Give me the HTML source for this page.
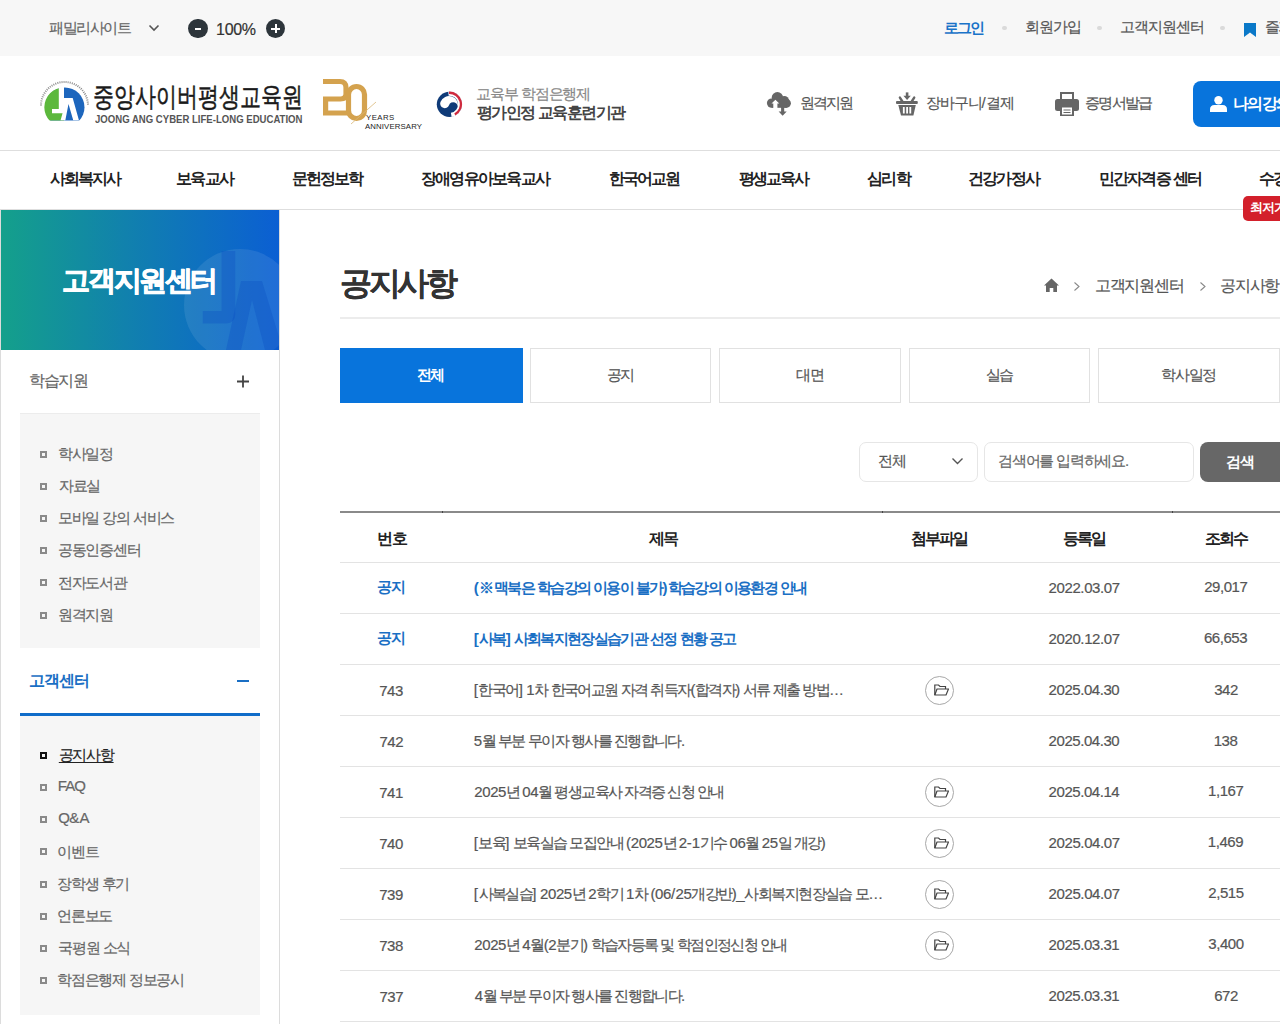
<!DOCTYPE html>
<html lang="ko"><head><meta charset="utf-8"><title>공지사항</title>
<style>
*{margin:0;padding:0;box-sizing:border-box}
html,body{width:1280px;height:1024px;overflow:hidden;background:#fff}
body{font-family:"Liberation Sans",sans-serif;color:#333}
#page{position:relative;width:1280px;height:1024px;overflow:hidden}
.t{position:absolute;white-space:nowrap}
.a{position:absolute}
#topbar{position:absolute;left:0;top:0;width:1280px;height:56px;background:#f7f7f7}
.hline{position:absolute;left:0;width:1280px;height:1px;background:#dedede}
.dot{position:absolute;width:4.5px;height:4.5px;border-radius:50%;background:#dadada;top:25.8px}
.zc{position:absolute;top:18.5px;width:19.5px;height:19.5px;border-radius:50%;background:#2d353b}
#myBtn{position:absolute;left:1193px;top:81px;width:140px;height:46px;border-radius:8px;background:#0874dc}
#badge{position:absolute;left:1243px;top:196px;width:70px;height:25px;border-radius:5px;background:#d3202b}
#side{position:absolute;left:0;top:210px;width:280px;height:814px;border-left:1px solid #dcdcdc;border-right:1px solid #dcdcdc}
#banner{position:absolute;left:1px;top:210px;width:278px;height:140px;overflow:hidden;background:linear-gradient(90deg,#14a08b 0%,#1181ad 45%,#0b5fd3 100%)}
.sub{position:absolute;left:20px;width:240px;background:#f6f6f6;border-top:1px solid #ececec}
.bul{position:absolute;left:40px;width:7px;height:7px;border:2px solid #8a8a8a}
.tab{position:absolute;top:348px;height:55px;border:1px solid #e1e1e1;background:#fff}
.rline{position:absolute;left:340px;width:940px;height:1px;background:#e3e3e3}
.att{position:absolute;left:925.2px;width:29px;height:29px;border:1px solid #a8a8a8;border-radius:50%}
.att svg{position:absolute;left:8px;top:7.3px}

</style></head><body>
<div id="page">
<div id="topbar"></div>
<svg class="a" style="left:148px;top:24px" width="12" height="8" viewBox="0 0 12 8"><path d="M1.5 1.5 L6 6 L10.5 1.5" fill="none" stroke="#555" stroke-width="1.6"/></svg>
<div class="zc" style="left:188.2px"><div class="a" style="left:6.5px;top:9px;width:6.5px;height:2px;background:#fff"></div></div>
<div class="zc" style="left:265.8px"><div class="a" style="left:5.5px;top:9px;width:8.5px;height:2px;background:#fff"></div><div class="a" style="left:8.75px;top:5.5px;width:2px;height:9px;background:#fff"></div></div>
<div class="dot" style="left:1002px"></div>
<div class="dot" style="left:1097px"></div>
<div class="dot" style="left:1220px"></div>
<svg class="a" style="left:1244px;top:23px" width="12" height="14" viewBox="0 0 12 14"><path d="M0 0 H12 V14 L6 9.5 L0 14 Z" fill="#0a78c8"/></svg>

<!-- header logo -->
<svg class="a" style="left:38px;top:76px" width="54" height="50" viewBox="0 0 54 50">
  <defs><clipPath id="lc"><rect x="0" y="0" width="54" height="44.4"/></clipPath></defs>
  <g clip-path="url(#lc)">
    <circle cx="26.8" cy="31.3" r="19.7" fill="#1d66bd"/>
    <path d="M26 11.6 A19.7 19.7 0 0 0 26 51 Z" fill="#5cb83c"/>
    <path d="M20.8 8 H26 V37.3 H14 V33 H20.8 Z" fill="#fff"/>
    <path d="M26 22 H34.7 L41 44.4 H35.3 L30.5 28 L27.3 44.4 H22.5 L26 32 Z" fill="#fff"/>
  </g>
  <path d="M3 29.5 A23.5 23.5 0 0 1 50 29.5" fill="none" stroke="#8c8c8c" stroke-width="2" stroke-dasharray="1 1.1"/>
</svg>
<!-- 20 years -->
<svg class="a" style="left:320px;top:76px" width="110" height="56" viewBox="0 0 110 56">
  <path d="M3 5.5 H20 Q26 5.5 26 11.5 V18 Q26 23 20.5 23 H5.6 V37 H28" fill="none" stroke="#d4a24e" stroke-width="5.2" stroke-linejoin="miter"/>
  <rect x="28.5" y="10.5" width="16" height="32" rx="8" fill="none" stroke="#d4a24e" stroke-width="5.2"/>
  <path d="M31 48 L56 26" stroke="#d9b877" stroke-width="0.8"/>
  <text x="46" y="44" font-family="Liberation Sans" font-size="7.8" fill="#222" letter-spacing="0.45">YEARS</text>
  <text x="45" y="53" font-family="Liberation Sans" font-size="7.8" fill="#222" letter-spacing="0.12">ANNIVERSARY</text>
</svg>
<!-- gov logo -->
<svg class="a" style="left:436px;top:91px" width="27" height="27" viewBox="0 0 27 27">
  <circle cx="13.4" cy="13.3" r="12.6" fill="#0f3b78"/>
  <path d="M12.28 0.55 A12.8 12.8 0 0 1 15.62 25.91 L14.89 21.77 A8.6 8.6 0 0 0 12.65 4.73 Z" fill="#fff"/>
  <path d="M12.96 0.61 A12.7 12.7 0 0 1 19.36 24.51 L18.28 22.48 A10.4 10.4 0 0 0 13.04 2.91 Z" fill="#cf2a3e"/>
  <g transform="translate(13 14.15) rotate(20)"><path d="M-9.1 0 A4.55 4.55 0 0 0 0 0 A4.55 4.55 0 0 1 9.1 0 A9.1 9.1 0 0 0 -9.1 0 Z" fill="#fff"/></g>
</svg>
<!-- header icons -->
<svg class="a" style="left:766px;top:91px" width="26" height="26" viewBox="0 0 26 26">
  <g fill="#666">
    <circle cx="5.6" cy="12.1" r="4.7"/><circle cx="11.4" cy="6.7" r="5.7"/><circle cx="18.3" cy="9.6" r="4.6"/><circle cx="20.2" cy="12.3" r="4.7"/>
    <rect x="5.6" y="9.5" width="14.6" height="7.3"/>
    <path d="M15.1 16 H18.2 V20.4 H20.7 L16.65 24.8 L12.6 20.4 H15.1 Z"/>
  </g>
  <path d="M9.4 8.8 L13.3 12.6 H11.4 V17.3 H7.3 V12.6 H5.5 Z" fill="#fff"/>
</svg>
<svg class="a" style="left:895px;top:92px" width="24" height="24" viewBox="0 0 24 24">
  <rect x="10.8" y="0.4" width="2.6" height="4.5" fill="#666"/>
  <path d="M8.4 3.8 H15.8 L12.1 8 Z" fill="#666"/>
  <path d="M4.9 5.6 L8 10.5 M19.2 5.6 L16.1 10.5" stroke="#666" stroke-width="2.4" stroke-linecap="round"/>
  <rect x="1" y="9.1" width="21.8" height="2.9" rx="1" fill="#666"/>
  <path d="M3.3 13 H20.8 L18.4 23.5 H6 Z" fill="#666"/>
  <path d="M8.8 15 V21.6 M12.1 15 V21.6 M15.3 15 V21.6" stroke="#fff" stroke-width="1.8"/>
</svg>
<svg class="a" style="left:1055px;top:92px" width="24" height="24" viewBox="0 0 24 24">
  <path d="M5 0 H19 V7 H17 V2 H7 V7 H5 Z" fill="#666"/>
  <rect x="0" y="7" width="24" height="12" rx="2.5" fill="#666"/>
  <rect x="5" y="14" width="14" height="10" fill="#666"/>
  <rect x="7" y="15.5" width="10" height="7" fill="#fff"/>
  <path d="M8.5 18 H15.5 M8.5 20.5 H15.5" stroke="#666" stroke-width="1"/>
</svg>
<div id="myBtn"></div>
<svg class="a" style="left:1209.5px;top:96px" width="17" height="16" viewBox="0 0 17 16">
  <circle cx="8.5" cy="4.2" r="4.2" fill="#fff"/>
  <path d="M0 16 V13.5 Q0 9 4.5 9 H12.5 Q17 9 17 13.5 V16 Z" fill="#fff"/>
</svg>
<div class="hline" style="top:150px"></div>
<div class="hline" style="top:209px"></div>
<div id="badge"></div>

<!-- sidebar -->
<div id="side"></div>
<div id="banner">
  <svg class="a" style="left:0;top:0" width="278" height="140" viewBox="0 0 278 140">
    <circle cx="239" cy="95" r="56" fill="#ffffff" fill-opacity="0.09"/>
    <path d="M220.6 41 H234.3 V104 Q234.3 113.4 225 113.4 H201.8 V101 H220.6 Z" fill="#0b4fc4" fill-opacity="0.35"/>
    <path d="M240 71 H261 L282 140 H264 L251 90 L240 140 H225 Z" fill="#0b4fc4" fill-opacity="0.35"/>
  </svg>
</div>
<svg class="a" style="left:236px;top:375px" width="14" height="14" viewBox="0 0 14 14"><path d="M1 6.5 H13 M7 0.5 V12.5" stroke="#444" stroke-width="1.8"/></svg>
<div class="sub" style="top:413px;height:235px"></div>
<div class="bul" style="top:450.5px"></div>
<div class="bul" style="top:482.7px"></div>
<div class="bul" style="top:514.9px"></div>
<div class="bul" style="top:547.1px"></div>
<div class="bul" style="top:579.3px"></div>
<div class="bul" style="top:611.5px"></div>
<div class="a" style="left:237px;top:680px;width:12px;height:2px;background:#1a6fc4"></div>
<div class="a" style="left:20px;top:713px;width:240px;height:3px;background:#0f6cc9"></div>
<div class="sub" style="top:716px;height:299px;border-top:0"></div>
<div class="bul" style="top:751.7px;border-color:#111"></div>
<div class="bul" style="top:783.9px"></div>
<div class="bul" style="top:816.1px"></div>
<div class="bul" style="top:848.3px"></div>
<div class="bul" style="top:880.5px"></div>
<div class="bul" style="top:912.7px"></div>
<div class="bul" style="top:944.9px"></div>
<div class="bul" style="top:977.1px"></div>

<!-- content -->
<div class="a" style="left:340px;top:317px;width:940px;height:2px;background:#ececec"></div>
<svg class="a" style="left:1044px;top:278px" width="15" height="14" viewBox="0 0 15 14"><path d="M7.5 0.5 L15 7.5 H13 V14 H9.3 V10 H5.7 V14 H2 V7.5 H0 Z" fill="#666"/></svg>
<svg class="a" style="left:1073px;top:281px" width="8" height="11" viewBox="0 0 8 11"><path d="M1.5 1.5 L6 5.5 L1.5 9.5" fill="none" stroke="#888" stroke-width="1.1"/></svg>
<svg class="a" style="left:1199px;top:281px" width="8" height="11" viewBox="0 0 8 11"><path d="M1.5 1.5 L6 5.5 L1.5 9.5" fill="none" stroke="#888" stroke-width="1.1"/></svg>
<div class="a" style="left:340px;top:348px;width:182.5px;height:55px;background:#0874dc"></div>
<div class="tab" style="left:529.6px;width:181.6px"></div>
<div class="tab" style="left:719.2px;width:181.6px"></div>
<div class="tab" style="left:908.8px;width:181.6px"></div>
<div class="tab" style="left:1098.4px;width:181.6px"></div>

<div class="a" style="left:859px;top:442px;width:119px;height:40px;border:1px solid #e6e6e6;border-radius:7px;background:#fff"></div>
<svg class="a" style="left:951px;top:457px" width="13" height="9" viewBox="0 0 13 9"><path d="M1.5 1.5 L6.5 6.5 L11.5 1.5" fill="none" stroke="#555" stroke-width="1.4"/></svg>
<div class="a" style="left:984px;top:442px;width:210px;height:40px;border:1px solid #e6e6e6;border-radius:7px;background:#fff"></div>
<div class="a" style="left:1200px;top:442px;width:88px;height:39.5px;border-radius:8px;background:#676767"></div>

<div class="a" style="left:340px;top:511px;width:940px;height:2px;background:#8a8a8a"></div>
<div class="a" style="left:442px;top:511px;width:1px;height:2px;background:#444"></div>
<div class="a" style="left:882px;top:511px;width:1px;height:2px;background:#444"></div>
<div class="a" style="left:1172px;top:511px;width:1px;height:2px;background:#444"></div>
<div class="rline" style="top:562px"></div>
<div class="rline" style="top:613px"></div>
<div class="rline" style="top:664px"></div>
<div class="rline" style="top:715px"></div>
<div class="rline" style="top:766px"></div>
<div class="rline" style="top:817px"></div>
<div class="rline" style="top:868px"></div>
<div class="rline" style="top:919px"></div>
<div class="rline" style="top:970px"></div>
<div class="rline" style="top:1021px"></div>
<div class="att" style="top:675.7px"><svg width="15" height="12" viewBox="0 0 15 12"><path d="M0.8 11 V1 H4.5 L6 2.5 H11.5 V5" fill="none" stroke="#444" stroke-width="1.2"/><path d="M0.8 11 L3 5 H14.5 L12 11 Z" fill="none" stroke="#444" stroke-width="1.2" stroke-linejoin="round"/></svg></div>
<div class="att" style="top:777.7px"><svg width="15" height="12" viewBox="0 0 15 12"><path d="M0.8 11 V1 H4.5 L6 2.5 H11.5 V5" fill="none" stroke="#444" stroke-width="1.2"/><path d="M0.8 11 L3 5 H14.5 L12 11 Z" fill="none" stroke="#444" stroke-width="1.2" stroke-linejoin="round"/></svg></div>
<div class="att" style="top:828.7px"><svg width="15" height="12" viewBox="0 0 15 12"><path d="M0.8 11 V1 H4.5 L6 2.5 H11.5 V5" fill="none" stroke="#444" stroke-width="1.2"/><path d="M0.8 11 L3 5 H14.5 L12 11 Z" fill="none" stroke="#444" stroke-width="1.2" stroke-linejoin="round"/></svg></div>
<div class="att" style="top:879.7px"><svg width="15" height="12" viewBox="0 0 15 12"><path d="M0.8 11 V1 H4.5 L6 2.5 H11.5 V5" fill="none" stroke="#444" stroke-width="1.2"/><path d="M0.8 11 L3 5 H14.5 L12 11 Z" fill="none" stroke="#444" stroke-width="1.2" stroke-linejoin="round"/></svg></div>
<div class="att" style="top:930.7px"><svg width="15" height="12" viewBox="0 0 15 12"><path d="M0.8 11 V1 H4.5 L6 2.5 H11.5 V5" fill="none" stroke="#444" stroke-width="1.2"/><path d="M0.8 11 L3 5 H14.5 L12 11 Z" fill="none" stroke="#444" stroke-width="1.2" stroke-linejoin="round"/></svg></div>

<div id="t0" class="t" style="top:17.65px;font-size:15px;line-height:20px;color:#666;-webkit-text-stroke:0.2px;left:49.10px;"><span style="letter-spacing:-1.45px">패밀리사이트</span></div>
<div id="t1" class="t" style="top:18.60px;font-size:16px;line-height:21px;color:#333;-webkit-text-stroke:0.2px;left:216.10px;"><span style="letter-spacing:-0.31px">100</span><span style="letter-spacing:0.33px">%</span></div>
<div id="t2" class="t" style="top:18.25px;font-size:15px;line-height:20px;color:#1a73c8;font-weight:700;left:943.60px;"><span style="letter-spacing:-1.60px">로그인</span></div>
<div id="t3" class="t" style="top:17.25px;font-size:15px;line-height:20px;color:#555;-webkit-text-stroke:0.2px;left:1025.00px;"><span style="letter-spacing:-0.98px">회원가입</span></div>
<div id="t4" class="t" style="top:17.25px;font-size:15px;line-height:20px;color:#555;-webkit-text-stroke:0.2px;left:1120.00px;"><span style="letter-spacing:-1.05px">고객지원센터</span></div>
<div id="t5" class="t" style="top:17.25px;font-size:15px;line-height:20px;color:#555;-webkit-text-stroke:0.2px;left:1264.50px;"><span style="letter-spacing:-1.40px">즐겨찾기</span></div>
<div id="t6" class="t" style="top:80.25px;font-size:27px;line-height:35px;color:#1a1a1a;left:93.40px;transform-origin:0 50%;transform:scaleX(0.7776);-webkit-text-stroke:0.5px #1a1a1a">중앙사이버평생교육원</div>
<div id="t7" class="t" style="top:112.45px;font-size:11px;line-height:14px;color:#555;font-weight:700;left:94.50px;transform-origin:0 50%;transform:scaleX(0.8705);">JOONG ANG CYBER LIFE-LONG EDUCATION</div>
<div id="t8" class="t" style="top:84.25px;font-size:15px;line-height:20px;color:#888;-webkit-text-stroke:0.2px;left:476.00px;"><span style="letter-spacing:-1.15px">교육부</span><span style="letter-spacing:-0.85px"> </span><span style="letter-spacing:-1.15px">학점은행제</span></div>
<div id="t9" class="t" style="top:101.55px;font-size:16px;line-height:21px;color:#444;font-weight:700;left:477.00px;"><span style="letter-spacing:-1.56px">평가인정</span><span style="letter-spacing:-1.24px"> </span><span style="letter-spacing:-1.56px">교육훈련기관</span></div>
<div id="t10" class="t" style="top:93.25px;font-size:15px;line-height:20px;color:#555;-webkit-text-stroke:0.2px;left:799.50px;"><span style="letter-spacing:-1.82px">원격지원</span></div>
<div id="t11" class="t" style="top:93.25px;font-size:15px;line-height:20px;color:#555;-webkit-text-stroke:0.2px;left:926.00px;"><span style="letter-spacing:-1.15px">장바구니</span><span style="letter-spacing:0.65px">/</span><span style="letter-spacing:-1.15px">결제</span></div>
<div id="t12" class="t" style="top:93.25px;font-size:15px;line-height:20px;color:#555;-webkit-text-stroke:0.2px;left:1085.00px;"><span style="letter-spacing:-1.65px">증명서발급</span></div>
<div id="t13" class="t" style="top:92.70px;font-size:16px;line-height:21px;color:#fff;font-weight:700;left:1233.00px;"><span style="letter-spacing:-1.68px">나의강의실</span></div>
<div id="t14" class="t" style="top:168.30px;font-size:16px;line-height:21px;color:#222;font-weight:700;left:49.60px;"><span style="letter-spacing:-1.88px">사회복지사</span></div>
<div id="t15" class="t" style="top:168.30px;font-size:16px;line-height:21px;color:#222;font-weight:700;left:176.40px;"><span style="letter-spacing:-1.93px">보육교사</span></div>
<div id="t16" class="t" style="top:168.30px;font-size:16px;line-height:21px;color:#222;font-weight:700;left:292.40px;"><span style="letter-spacing:-2.01px">문헌정보학</span></div>
<div id="t17" class="t" style="top:168.30px;font-size:16px;line-height:21px;color:#222;font-weight:700;left:421.00px;"><span style="letter-spacing:-1.76px">장애영유아보육교사</span></div>
<div id="t18" class="t" style="top:168.30px;font-size:16px;line-height:21px;color:#222;font-weight:700;left:609.00px;"><span style="letter-spacing:-1.89px">한국어교원</span></div>
<div id="t19" class="t" style="top:168.30px;font-size:16px;line-height:21px;color:#222;font-weight:700;left:738.50px;"><span style="letter-spacing:-2.01px">평생교육사</span></div>
<div id="t20" class="t" style="top:168.30px;font-size:16px;line-height:21px;color:#222;font-weight:700;left:867.30px;"><span style="letter-spacing:-1.86px">심리학</span></div>
<div id="t21" class="t" style="top:168.30px;font-size:16px;line-height:21px;color:#222;font-weight:700;left:967.50px;"><span style="letter-spacing:-1.64px">건강가정사</span></div>
<div id="t22" class="t" style="top:168.30px;font-size:16px;line-height:21px;color:#222;font-weight:700;left:1098.50px;"><span style="letter-spacing:-1.69px">민간자격증</span><span style="letter-spacing:-1.37px"> </span><span style="letter-spacing:-1.69px">센터</span></div>
<div id="t23" class="t" style="top:168.30px;font-size:16px;line-height:21px;color:#222;font-weight:700;left:1259.00px;"><span style="letter-spacing:-1.83px">수강신청</span></div>
<div id="t24" class="t" style="top:199.35px;font-size:13px;line-height:17px;color:#fff;font-weight:700;left:1250.00px;"><span style="letter-spacing:-1.04px">최저가보장</span></div>
<div id="t25" class="t" style="top:263.20px;font-size:28px;line-height:36px;color:#fff;font-weight:700;left:139.15px;transform:translateX(-50%);-webkit-text-stroke:0.8px #fff"><span style="letter-spacing:-2.38px">고객지원센터</span></div>
<div id="t26" class="t" style="top:370.20px;font-size:16px;line-height:21px;color:#666;-webkit-text-stroke:0.2px;left:29.40px;"><span style="letter-spacing:-1.59px">학습지원</span></div>
<div id="t27" class="t" style="top:443.65px;font-size:15px;line-height:20px;color:#666;-webkit-text-stroke:0.2px;left:58.00px;"><span style="letter-spacing:-1.30px">학사일정</span></div>
<div id="t28" class="t" style="top:476.25px;font-size:15px;line-height:20px;color:#666;-webkit-text-stroke:0.2px;left:59.00px;"><span style="letter-spacing:-1.30px">자료실</span></div>
<div id="t29" class="t" style="top:508.35px;font-size:15px;line-height:20px;color:#666;-webkit-text-stroke:0.2px;left:58.00px;"><span style="letter-spacing:-1.30px">모바일</span><span style="letter-spacing:-1.00px"> </span><span style="letter-spacing:-1.30px">강의</span><span style="letter-spacing:-1.00px"> </span><span style="letter-spacing:-1.30px">서비스</span></div>
<div id="t30" class="t" style="top:540.45px;font-size:15px;line-height:20px;color:#666;-webkit-text-stroke:0.2px;left:58.00px;"><span style="letter-spacing:-1.30px">공동인증센터</span></div>
<div id="t31" class="t" style="top:572.55px;font-size:15px;line-height:20px;color:#666;-webkit-text-stroke:0.2px;left:58.00px;"><span style="letter-spacing:-1.30px">전자도서관</span></div>
<div id="t32" class="t" style="top:605.15px;font-size:15px;line-height:20px;color:#666;-webkit-text-stroke:0.2px;left:58.00px;"><span style="letter-spacing:-1.30px">원격지원</span></div>
<div id="t33" class="t" style="top:670.30px;font-size:16px;line-height:21px;color:#1a6fc4;font-weight:700;left:29.40px;"><span style="letter-spacing:-1.26px">고객센터</span></div>
<div id="t34" class="t" style="top:745.05px;font-size:15px;line-height:20px;color:#222;-webkit-text-stroke:0.2px;left:58.80px;text-decoration:underline;text-underline-offset:2px"><span style="letter-spacing:-1.30px">공지사항</span></div>
<div id="t35" class="t" style="top:776.35px;font-size:15px;line-height:20px;color:#666;-webkit-text-stroke:0.2px;left:57.80px;"><span style="letter-spacing:-1.00px">FA</span><span style="letter-spacing:-0.70px">Q</span></div>
<div id="t36" class="t" style="top:808.45px;font-size:15px;line-height:20px;color:#666;-webkit-text-stroke:0.2px;left:58.30px;"><span style="letter-spacing:-0.70px">Q</span><span style="letter-spacing:0.20px">&</span><span style="letter-spacing:-1.00px">A</span></div>
<div id="t37" class="t" style="top:841.55px;font-size:15px;line-height:20px;color:#666;-webkit-text-stroke:0.2px;left:57.30px;"><span style="letter-spacing:-1.30px">이벤트</span></div>
<div id="t38" class="t" style="top:873.65px;font-size:15px;line-height:20px;color:#666;-webkit-text-stroke:0.2px;left:57.30px;"><span style="letter-spacing:-1.30px">장학생</span><span style="letter-spacing:-1.00px"> </span><span style="letter-spacing:-1.30px">후기</span></div>
<div id="t39" class="t" style="top:906.25px;font-size:15px;line-height:20px;color:#666;-webkit-text-stroke:0.2px;left:57.30px;"><span style="letter-spacing:-1.30px">언론보도</span></div>
<div id="t40" class="t" style="top:938.35px;font-size:15px;line-height:20px;color:#666;-webkit-text-stroke:0.2px;left:58.30px;"><span style="letter-spacing:-1.30px">국평원</span><span style="letter-spacing:-1.00px"> </span><span style="letter-spacing:-1.30px">소식</span></div>
<div id="t41" class="t" style="top:970.45px;font-size:15px;line-height:20px;color:#666;-webkit-text-stroke:0.2px;left:57.30px;"><span style="letter-spacing:-1.30px">학점은행제</span><span style="letter-spacing:-1.00px"> </span><span style="letter-spacing:-1.30px">정보공시</span></div>
<div id="t42" class="t" style="top:262.20px;font-size:32px;line-height:42px;color:#333;font-weight:700;left:340.30px;-webkit-text-stroke:0.1px #333"><span style="letter-spacing:-3.52px">공지사항</span></div>
<div id="t43" class="t" style="top:274.60px;font-size:16px;line-height:21px;color:#555;-webkit-text-stroke:0.2px;left:1095.00px;"><span style="letter-spacing:-1.26px">고객지원센터</span></div>
<div id="t44" class="t" style="top:274.60px;font-size:16px;line-height:21px;color:#555;-webkit-text-stroke:0.2px;left:1220.20px;"><span style="letter-spacing:-1.34px">공지사항</span></div>
<div id="t45" class="t" style="top:365.45px;font-size:15px;line-height:20px;color:#fff;font-weight:700;left:430.00px;transform:translateX(-50%);"><span style="letter-spacing:-1.50px">전체</span></div>
<div id="t46" class="t" style="top:365.45px;font-size:15px;line-height:20px;color:#555;-webkit-text-stroke:0.2px;left:620.00px;transform:translateX(-50%);"><span style="letter-spacing:-1.50px">공지</span></div>
<div id="t47" class="t" style="top:365.45px;font-size:15px;line-height:20px;color:#555;-webkit-text-stroke:0.2px;left:809.75px;transform:translateX(-50%);"><span style="letter-spacing:-1.50px">대면</span></div>
<div id="t48" class="t" style="top:365.45px;font-size:15px;line-height:20px;color:#555;-webkit-text-stroke:0.2px;left:999.00px;transform:translateX(-50%);"><span style="letter-spacing:-1.50px">실습</span></div>
<div id="t49" class="t" style="top:365.45px;font-size:15px;line-height:20px;color:#555;-webkit-text-stroke:0.2px;left:1188.75px;transform:translateX(-50%);"><span style="letter-spacing:-1.32px">학사일정</span></div>
<div id="t50" class="t" style="top:451.15px;font-size:15px;line-height:20px;color:#555;-webkit-text-stroke:0.2px;left:878.40px;"><span style="letter-spacing:-1.60px">전체</span></div>
<div id="t51" class="t" style="top:451.15px;font-size:15px;line-height:20px;color:#666;-webkit-text-stroke:0.2px;left:998.00px;"><span style="letter-spacing:-1.25px">검색어를</span><span style="letter-spacing:-0.95px"> </span><span style="letter-spacing:-1.25px">입력하세요</span><span style="letter-spacing:-0.05px">.</span></div>
<div id="t52" class="t" style="top:451.65px;font-size:15px;line-height:20px;color:#fff;font-weight:700;left:1239.75px;transform:translateX(-50%);"><span style="letter-spacing:-1.60px">검색</span></div>
<div id="t53" class="t" style="top:527.70px;font-size:16px;line-height:21px;color:#222;font-weight:700;left:391.60px;transform:translateX(-50%);"><span style="letter-spacing:-1.88px">번호</span></div>
<div id="t54" class="t" style="top:527.70px;font-size:16px;line-height:21px;color:#222;font-weight:700;left:663.15px;transform:translateX(-50%);"><span style="letter-spacing:-1.88px">제목</span></div>
<div id="t55" class="t" style="top:527.70px;font-size:16px;line-height:21px;color:#222;font-weight:700;left:938.90px;transform:translateX(-50%);"><span style="letter-spacing:-1.93px">첨부파일</span></div>
<div id="t56" class="t" style="top:527.70px;font-size:16px;line-height:21px;color:#222;font-weight:700;left:1083.85px;transform:translateX(-50%);"><span style="letter-spacing:-1.88px">등록일</span></div>
<div id="t57" class="t" style="top:527.70px;font-size:16px;line-height:21px;color:#222;font-weight:700;left:1225.75px;transform:translateX(-50%);"><span style="letter-spacing:-1.88px">조회수</span></div>
<div id="t58" class="t" style="top:577.45px;font-size:15px;line-height:20px;color:#1a6fc4;font-weight:700;left:390.75px;transform:translateX(-50%);"><span style="letter-spacing:-1.50px">공지</span></div>
<div id="t59" class="t" style="top:578.45px;font-size:15px;line-height:20px;color:#1a6fc4;font-weight:700;left:473.80px;"><span style="letter-spacing:0.13px">(※</span><span style="letter-spacing:-1.67px">맥북은</span><span style="letter-spacing:-1.37px"> </span><span style="letter-spacing:-1.67px">학습강의</span><span style="letter-spacing:-1.37px"> </span><span style="letter-spacing:-1.67px">이용이</span><span style="letter-spacing:-1.37px"> </span><span style="letter-spacing:-1.67px">불가</span><span style="letter-spacing:0.13px">)</span><span style="letter-spacing:-1.67px">학습강의</span><span style="letter-spacing:-1.37px"> </span><span style="letter-spacing:-1.67px">이용환경</span><span style="letter-spacing:-1.37px"> </span><span style="letter-spacing:-1.67px">안내</span></div>
<div id="t60" class="t" style="top:578.45px;font-size:15px;line-height:20px;color:#555;-webkit-text-stroke:0.2px;left:1084.15px;transform:translateX(-50%);"><span style="letter-spacing:-0.39px">2022.03.07</span></div>
<div id="t61" class="t" style="top:577.45px;font-size:15px;line-height:20px;color:#555;-webkit-text-stroke:0.2px;left:1225.75px;transform:translateX(-50%);"><span style="letter-spacing:-0.45px">29,017</span></div>
<div id="t62" class="t" style="top:628.45px;font-size:15px;line-height:20px;color:#1a6fc4;font-weight:700;left:390.75px;transform:translateX(-50%);"><span style="letter-spacing:-1.50px">공지</span></div>
<div id="t63" class="t" style="top:629.45px;font-size:15px;line-height:20px;color:#1a6fc4;font-weight:700;left:473.80px;"><span style="letter-spacing:0.15px">[</span><span style="letter-spacing:-1.65px">사복</span><span style="letter-spacing:0.15px">]</span><span style="letter-spacing:-1.35px"> </span><span style="letter-spacing:-1.65px">사회복지현장실습기관</span><span style="letter-spacing:-1.35px"> </span><span style="letter-spacing:-1.65px">선정</span><span style="letter-spacing:-1.35px"> </span><span style="letter-spacing:-1.65px">현황</span><span style="letter-spacing:-1.35px"> </span><span style="letter-spacing:-1.65px">공고</span></div>
<div id="t64" class="t" style="top:629.45px;font-size:15px;line-height:20px;color:#555;-webkit-text-stroke:0.2px;left:1084.15px;transform:translateX(-50%);"><span style="letter-spacing:-0.39px">2020.12.07</span></div>
<div id="t65" class="t" style="top:628.45px;font-size:15px;line-height:20px;color:#555;-webkit-text-stroke:0.2px;left:1225.50px;transform:translateX(-50%);"><span style="letter-spacing:-0.45px">66,653</span></div>
<div id="t66" class="t" style="top:681.45px;font-size:15px;line-height:20px;color:#555;-webkit-text-stroke:0.2px;left:391.00px;transform:translateX(-50%);"><span style="letter-spacing:-0.45px">743</span></div>
<div id="t67" class="t" style="top:680.45px;font-size:15px;line-height:20px;color:#555;-webkit-text-stroke:0.2px;left:473.80px;"><span style="letter-spacing:0.51px">[</span><span style="letter-spacing:-1.59px">한국어</span><span style="letter-spacing:0.51px">]</span><span style="letter-spacing:-1.29px"> </span><span style="letter-spacing:-0.39px">1</span><span style="letter-spacing:-1.59px">차</span><span style="letter-spacing:-1.29px"> </span><span style="letter-spacing:-1.59px">한국어교원</span><span style="letter-spacing:-1.29px"> </span><span style="letter-spacing:-1.59px">자격</span><span style="letter-spacing:-1.29px"> </span><span style="letter-spacing:-1.59px">취득자</span><span style="letter-spacing:-0.39px">(</span><span style="letter-spacing:-1.59px">합격자</span><span style="letter-spacing:-0.39px">)</span><span style="letter-spacing:-1.29px"> </span><span style="letter-spacing:-1.59px">서류</span><span style="letter-spacing:-1.29px"> </span><span style="letter-spacing:-1.59px">제출</span><span style="letter-spacing:-1.29px"> </span><span style="letter-spacing:-1.59px">방법</span><span style="letter-spacing:-0.39px">…</span></div>
<div id="t68" class="t" style="top:680.45px;font-size:15px;line-height:20px;color:#555;-webkit-text-stroke:0.2px;left:1083.90px;transform:translateX(-50%);"><span style="letter-spacing:-0.45px">2025.04.30</span></div>
<div id="t69" class="t" style="top:680.45px;font-size:15px;line-height:20px;color:#555;-webkit-text-stroke:0.2px;left:1226.00px;transform:translateX(-50%);"><span style="letter-spacing:-0.45px">342</span></div>
<div id="t70" class="t" style="top:732.45px;font-size:15px;line-height:20px;color:#555;-webkit-text-stroke:0.2px;left:391.25px;transform:translateX(-50%);"><span style="letter-spacing:-0.45px">742</span></div>
<div id="t71" class="t" style="top:731.45px;font-size:15px;line-height:20px;color:#555;-webkit-text-stroke:0.2px;left:473.80px;"><span style="letter-spacing:-0.40px">5</span><span style="letter-spacing:-1.60px">월</span><span style="letter-spacing:-1.30px"> </span><span style="letter-spacing:-1.60px">부분</span><span style="letter-spacing:-1.30px"> </span><span style="letter-spacing:-1.60px">무이자</span><span style="letter-spacing:-1.30px"> </span><span style="letter-spacing:-1.60px">행사를</span><span style="letter-spacing:-1.30px"> </span><span style="letter-spacing:-1.60px">진행합니다</span><span style="letter-spacing:-0.40px">.</span></div>
<div id="t72" class="t" style="top:731.45px;font-size:15px;line-height:20px;color:#555;-webkit-text-stroke:0.2px;left:1083.90px;transform:translateX(-50%);"><span style="letter-spacing:-0.45px">2025.04.30</span></div>
<div id="t73" class="t" style="top:731.45px;font-size:15px;line-height:20px;color:#555;-webkit-text-stroke:0.2px;left:1225.50px;transform:translateX(-50%);"><span style="letter-spacing:-0.45px">138</span></div>
<div id="t74" class="t" style="top:783.45px;font-size:15px;line-height:20px;color:#555;-webkit-text-stroke:0.2px;left:391.00px;transform:translateX(-50%);"><span style="letter-spacing:-0.45px">741</span></div>
<div id="t75" class="t" style="top:782.45px;font-size:15px;line-height:20px;color:#555;-webkit-text-stroke:0.2px;left:474.30px;"><span style="letter-spacing:-0.41px">2025</span><span style="letter-spacing:-1.61px">년</span><span style="letter-spacing:-1.31px"> </span><span style="letter-spacing:-0.41px">04</span><span style="letter-spacing:-1.61px">월</span><span style="letter-spacing:-1.31px"> </span><span style="letter-spacing:-1.61px">평생교육사</span><span style="letter-spacing:-1.31px"> </span><span style="letter-spacing:-1.61px">자격증</span><span style="letter-spacing:-1.31px"> </span><span style="letter-spacing:-1.61px">신청</span><span style="letter-spacing:-1.31px"> </span><span style="letter-spacing:-1.61px">안내</span></div>
<div id="t76" class="t" style="top:782.45px;font-size:15px;line-height:20px;color:#555;-webkit-text-stroke:0.2px;left:1083.90px;transform:translateX(-50%);"><span style="letter-spacing:-0.45px">2025.04.14</span></div>
<div id="t77" class="t" style="top:781.45px;font-size:15px;line-height:20px;color:#555;-webkit-text-stroke:0.2px;left:1225.75px;transform:translateX(-50%);"><span style="letter-spacing:-0.45px">1,167</span></div>
<div id="t78" class="t" style="top:834.45px;font-size:15px;line-height:20px;color:#555;-webkit-text-stroke:0.2px;left:391.00px;transform:translateX(-50%);"><span style="letter-spacing:-0.45px">740</span></div>
<div id="t79" class="t" style="top:833.45px;font-size:15px;line-height:20px;color:#555;-webkit-text-stroke:0.2px;left:473.80px;"><span style="letter-spacing:0.52px">[</span><span style="letter-spacing:-1.58px">보육</span><span style="letter-spacing:0.52px">]</span><span style="letter-spacing:-1.28px"> </span><span style="letter-spacing:-1.58px">보육실습</span><span style="letter-spacing:-1.28px"> </span><span style="letter-spacing:-1.58px">모집안내</span><span style="letter-spacing:-1.28px"> </span><span style="letter-spacing:-0.38px">(2025</span><span style="letter-spacing:-1.58px">년</span><span style="letter-spacing:-1.28px"> </span><span style="letter-spacing:-0.38px">2</span><span style="letter-spacing:-0.08px">-</span><span style="letter-spacing:-0.38px">1</span><span style="letter-spacing:-1.58px">기수</span><span style="letter-spacing:-1.28px"> </span><span style="letter-spacing:-0.38px">06</span><span style="letter-spacing:-1.58px">월</span><span style="letter-spacing:-1.28px"> </span><span style="letter-spacing:-0.38px">25</span><span style="letter-spacing:-1.58px">일</span><span style="letter-spacing:-1.28px"> </span><span style="letter-spacing:-1.58px">개강</span><span style="letter-spacing:-0.38px">)</span></div>
<div id="t80" class="t" style="top:833.45px;font-size:15px;line-height:20px;color:#555;-webkit-text-stroke:0.2px;left:1084.15px;transform:translateX(-50%);"><span style="letter-spacing:-0.39px">2025.04.07</span></div>
<div id="t81" class="t" style="top:832.45px;font-size:15px;line-height:20px;color:#555;-webkit-text-stroke:0.2px;left:1225.50px;transform:translateX(-50%);"><span style="letter-spacing:-0.45px">1,469</span></div>
<div id="t82" class="t" style="top:885.45px;font-size:15px;line-height:20px;color:#555;-webkit-text-stroke:0.2px;left:391.00px;transform:translateX(-50%);"><span style="letter-spacing:-0.45px">739</span></div>
<div id="t83" class="t" style="top:884.45px;font-size:15px;line-height:20px;color:#555;-webkit-text-stroke:0.2px;left:473.80px;"><span style="letter-spacing:0.54px">[</span><span style="letter-spacing:-1.56px">사복실습</span><span style="letter-spacing:0.54px">]</span><span style="letter-spacing:-1.26px"> </span><span style="letter-spacing:-0.36px">2025</span><span style="letter-spacing:-1.56px">년</span><span style="letter-spacing:-1.26px"> </span><span style="letter-spacing:-0.36px">2</span><span style="letter-spacing:-1.56px">학기</span><span style="letter-spacing:-1.26px"> </span><span style="letter-spacing:-0.36px">1</span><span style="letter-spacing:-1.56px">차</span><span style="letter-spacing:-1.26px"> </span><span style="letter-spacing:-0.36px">(06</span><span style="letter-spacing:0.24px">/</span><span style="letter-spacing:-0.36px">25</span><span style="letter-spacing:-1.56px">개강반</span><span style="letter-spacing:-0.36px">)_</span><span style="letter-spacing:-1.56px">사회복지현장실습</span><span style="letter-spacing:-1.26px"> </span><span style="letter-spacing:-1.56px">모</span><span style="letter-spacing:-0.36px">…</span></div>
<div id="t84" class="t" style="top:884.45px;font-size:15px;line-height:20px;color:#555;-webkit-text-stroke:0.2px;left:1084.15px;transform:translateX(-50%);"><span style="letter-spacing:-0.39px">2025.04.07</span></div>
<div id="t85" class="t" style="top:883.45px;font-size:15px;line-height:20px;color:#555;-webkit-text-stroke:0.2px;left:1226.00px;transform:translateX(-50%);"><span style="letter-spacing:-0.45px">2,515</span></div>
<div id="t86" class="t" style="top:936.45px;font-size:15px;line-height:20px;color:#555;-webkit-text-stroke:0.2px;left:391.00px;transform:translateX(-50%);"><span style="letter-spacing:-0.45px">738</span></div>
<div id="t87" class="t" style="top:935.45px;font-size:15px;line-height:20px;color:#555;-webkit-text-stroke:0.2px;left:474.30px;"><span style="letter-spacing:-0.40px">2025</span><span style="letter-spacing:-1.60px">년</span><span style="letter-spacing:-1.30px"> </span><span style="letter-spacing:-0.40px">4</span><span style="letter-spacing:-1.60px">월</span><span style="letter-spacing:-0.40px">(2</span><span style="letter-spacing:-1.60px">분기</span><span style="letter-spacing:-0.40px">)</span><span style="letter-spacing:-1.30px"> </span><span style="letter-spacing:-1.60px">학습자등록</span><span style="letter-spacing:-1.30px"> </span><span style="letter-spacing:-1.60px">및</span><span style="letter-spacing:-1.30px"> </span><span style="letter-spacing:-1.60px">학점인정신청</span><span style="letter-spacing:-1.30px"> </span><span style="letter-spacing:-1.60px">안내</span></div>
<div id="t88" class="t" style="top:935.45px;font-size:15px;line-height:20px;color:#555;-webkit-text-stroke:0.2px;left:1083.90px;transform:translateX(-50%);"><span style="letter-spacing:-0.45px">2025.03.31</span></div>
<div id="t89" class="t" style="top:934.45px;font-size:15px;line-height:20px;color:#555;-webkit-text-stroke:0.2px;left:1226.00px;transform:translateX(-50%);"><span style="letter-spacing:-0.45px">3,400</span></div>
<div id="t90" class="t" style="top:987.45px;font-size:15px;line-height:20px;color:#555;-webkit-text-stroke:0.2px;left:391.25px;transform:translateX(-50%);"><span style="letter-spacing:-0.45px">737</span></div>
<div id="t91" class="t" style="top:986.45px;font-size:15px;line-height:20px;color:#555;-webkit-text-stroke:0.2px;left:474.80px;"><span style="letter-spacing:-0.45px">4</span><span style="letter-spacing:-1.65px">월</span><span style="letter-spacing:-1.35px"> </span><span style="letter-spacing:-1.65px">부분</span><span style="letter-spacing:-1.35px"> </span><span style="letter-spacing:-1.65px">무이자</span><span style="letter-spacing:-1.35px"> </span><span style="letter-spacing:-1.65px">행사를</span><span style="letter-spacing:-1.35px"> </span><span style="letter-spacing:-1.65px">진행합니다</span><span style="letter-spacing:-0.45px">.</span></div>
<div id="t92" class="t" style="top:986.45px;font-size:15px;line-height:20px;color:#555;-webkit-text-stroke:0.2px;left:1083.90px;transform:translateX(-50%);"><span style="letter-spacing:-0.45px">2025.03.31</span></div>
<div id="t93" class="t" style="top:986.45px;font-size:15px;line-height:20px;color:#555;-webkit-text-stroke:0.2px;left:1226.00px;transform:translateX(-50%);"><span style="letter-spacing:-0.45px">672</span></div>
</div>
</body></html>
